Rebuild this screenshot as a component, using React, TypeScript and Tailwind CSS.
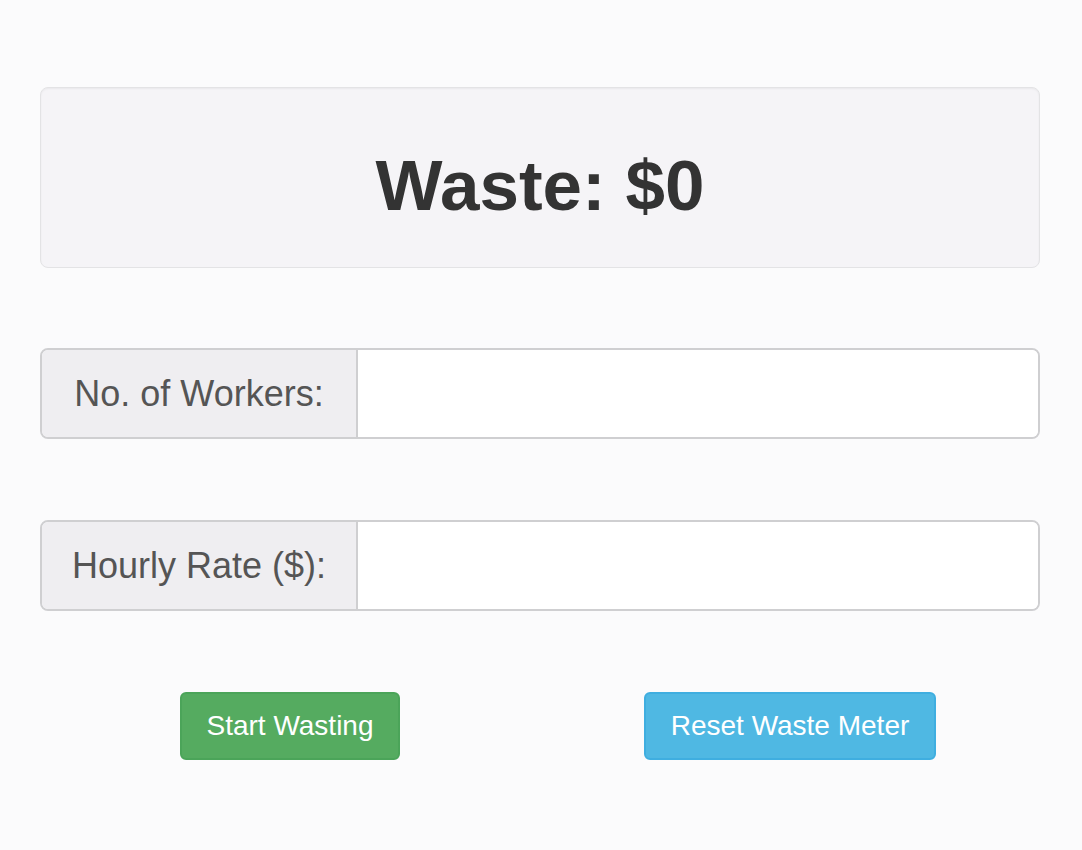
export default function App() {
  return (
    <div className="min-h-[850px] bg-[#fbfbfc] font-['Liberation_Sans',Arial,sans-serif]">
      <div className="ml-[40px] w-[1000px] pt-[87px]">
        <div className="flex h-[181px] items-center justify-center rounded-[8px] border border-[#e3e3e5] bg-[#f5f4f7] pt-[16px] shadow-[inset_0_1px_2px_rgba(0,0,0,0.05)]">
          <h1 className="text-[71px] font-bold leading-none text-[#333333]">Waste: $0</h1>
        </div>

        <div className="mt-[80px] flex h-[91px] overflow-hidden rounded-[8px] border-2 border-[#cfcfd1]">
          <label className="flex w-[316px] items-center justify-center border-r-2 border-[#cfcfd1] bg-[#efeef1] text-[36px] text-[#555555]">
            No. of Workers:
          </label>
          <input type="text" className="flex-1 bg-white px-4 text-[34px] outline-none" />
        </div>

        <div className="mt-[81px] flex h-[91px] overflow-hidden rounded-[8px] border-2 border-[#cfcfd1]">
          <label className="flex w-[316px] items-center justify-center border-r-2 border-[#cfcfd1] bg-[#efeef1] text-[36px] text-[#555555]">
            Hourly Rate ($):
          </label>
          <input type="text" className="flex-1 bg-white px-4 text-[34px] outline-none" />
        </div>

        <div className="mt-[81px] grid grid-cols-2">
          <div className="flex justify-center">
            <button className="h-[68px] w-[220px] rounded-[6px] border-2 border-[#4ba459] bg-[#55ab60] text-[28px] text-white">
              Start Wasting
            </button>
          </div>
          <div className="flex justify-center">
            <button className="h-[68px] w-[292px] rounded-[6px] border-2 border-[#3faee0] bg-[#4fb8e3] text-[28px] text-white">
              Reset Waste Meter
            </button>
          </div>
        </div>
      </div>
    </div>
  );
}
